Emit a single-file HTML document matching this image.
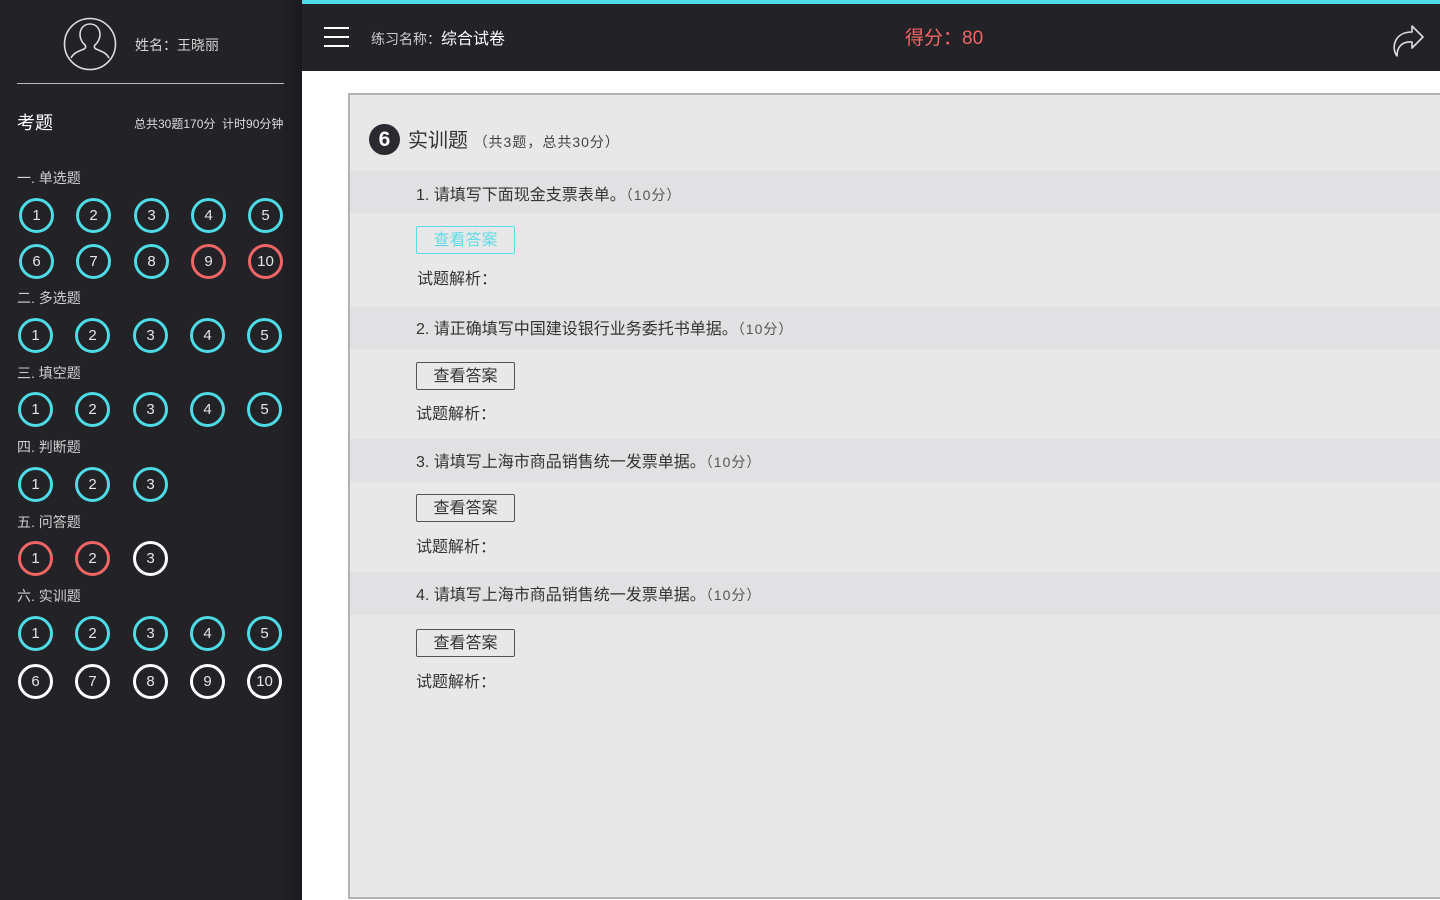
<!DOCTYPE html>
<html><head><meta charset="utf-8">
<style>
*{margin:0;padding:0;box-sizing:border-box}
body{width:1440px;height:900px;overflow:hidden;background:#fff;font-family:"Liberation Sans","Noto Sans CJK SC",sans-serif;position:relative}
.side{position:absolute;left:0;top:0;width:302px;height:900px;background:linear-gradient(to right,#232227 0,#232227 275px,#1b1a1e 302px)}
.a{position:absolute;white-space:nowrap}
.c{position:absolute;width:35px;height:35px;border-radius:50%;border:3px solid #4ddbe6;color:#e6e6e6;font-size:15px;line-height:30px;text-align:center}
.r{border-color:#f26565}.w{border-color:#fff}
.lbl{position:absolute;left:17px;color:#d0d0d0;font-size:14px}
.top{position:absolute;left:302px;top:0;width:1138px;height:71px;background:#232227;border-top:4px solid #4ddbe6}
.panel{position:absolute;left:348px;top:93px;width:1100px;height:806px;background:#e8e8e8;border:2px solid #b3b3b3}
.band{position:absolute;left:0;width:1100px;height:43px;background:#e1e1e3}
.q{position:absolute;left:66px;font-size:16px;color:#333}
.q small{font-size:14px;color:#555;letter-spacing:1px}
.btn{position:absolute;left:66px;width:99px;height:28px;border:1px solid #555;border-radius:2px;font-size:16px;color:#333;text-align:center;line-height:27px}
.ex{position:absolute;left:66px;font-size:16px;color:#333}
</style></head><body>
<div class="side">
<svg class="a" style="left:63px;top:17px" width="54" height="54" viewBox="0 0 54 54"><circle cx="27" cy="27" r="25.5" fill="none" stroke="#ddd" stroke-width="1.6"/><path d="M27 7c-6 0-10 4.5-10 10.5 0 4.5 2.5 8.5 5 10.5 1 1 1 3-1 4-4 2-10 3-13 9M27 7c6 0 10 4.5 10 10.5 0 4.5-2.5 8.5-5 10.5-1 1-1 3 1 4 4 2 10 3 13 9" fill="none" stroke="#ddd" stroke-width="1.6"/></svg>
<div class="a" style="left:135px;top:35px;color:#d6d6d6;font-size:14px">姓名：王晓丽</div>
<div class="a" style="left:17px;top:83px;width:267px;height:1px;background:#bbb"></div>
<div class="a" style="left:17px;top:109px;color:#fff;font-size:18px">考题</div>
<div class="a" style="left:134px;top:115px;color:#ddd;font-size:12px">总共30题170分&nbsp; 计时90分钟</div>
<div class="lbl" style="top:168px">一. 单选题</div>
<div class="c" style="left:19px;top:198px">1</div><div class="c" style="left:76px;top:198px">2</div><div class="c" style="left:134px;top:198px">3</div><div class="c" style="left:191px;top:198px">4</div><div class="c" style="left:248px;top:198px">5</div>
<div class="c" style="left:19px;top:244px">6</div><div class="c" style="left:76px;top:244px">7</div><div class="c" style="left:134px;top:244px">8</div><div class="c r" style="left:191px;top:244px">9</div><div class="c r" style="left:248px;top:244px">10</div>
<div class="lbl" style="top:288px">二. 多选题</div>
<div class="c" style="left:18px;top:318px">1</div><div class="c" style="left:75px;top:318px">2</div><div class="c" style="left:133px;top:318px">3</div><div class="c" style="left:190px;top:318px">4</div><div class="c" style="left:247px;top:318px">5</div>
<div class="lbl" style="top:363px">三. 填空题</div>
<div class="c" style="left:18px;top:392px">1</div><div class="c" style="left:75px;top:392px">2</div><div class="c" style="left:133px;top:392px">3</div><div class="c" style="left:190px;top:392px">4</div><div class="c" style="left:247px;top:392px">5</div>
<div class="lbl" style="top:437px">四. 判断题</div>
<div class="c" style="left:18px;top:467px">1</div><div class="c" style="left:75px;top:467px">2</div><div class="c" style="left:133px;top:467px">3</div>
<div class="lbl" style="top:512px">五. 问答题</div>
<div class="c r" style="left:18px;top:541px">1</div><div class="c r" style="left:75px;top:541px">2</div><div class="c w" style="left:133px;top:541px">3</div>
<div class="lbl" style="top:586px">六. 实训题</div>
<div class="c" style="left:18px;top:616px">1</div><div class="c" style="left:75px;top:616px">2</div><div class="c" style="left:133px;top:616px">3</div><div class="c" style="left:190px;top:616px">4</div><div class="c" style="left:247px;top:616px">5</div>
<div class="c w" style="left:18px;top:664px">6</div><div class="c w" style="left:75px;top:664px">7</div><div class="c w" style="left:133px;top:664px">8</div><div class="c w" style="left:190px;top:664px">9</div><div class="c w" style="left:247px;top:664px">10</div>
</div>
<div class="top">
<div class="a" style="left:22px;top:23px;width:25px;height:2px;background:#fff;box-shadow:0 9px 0 #fff,0 18px 0 #fff"></div>
<div class="a" style="left:69px;top:21px;color:#ccc;font-size:14px">练习名称：<span style="color:#fff;font-size:16px">综合试卷</span></div>
<div class="a" style="left:603px;top:19px;color:#f26565;font-size:19px">得分：80</div>
<svg class="a" style="left:1090px;top:14px" width="34" height="40" viewBox="0 0 34 40"><path d="M5 38C-1 30 2 14 20 14V8l11 11-11 11v-6C9 23 5 30 5 38z" fill="none" stroke="#ddd" stroke-width="1.6" stroke-linejoin="round"/></svg>
</div>
<div class="panel">
<div class="a" style="left:19px;top:29px;width:31px;height:31px;border-radius:50%;background:#2a2a30;color:#fff;font-size:21px;text-align:center;line-height:31px;font-weight:bold">6</div>
<div class="a" style="left:58px;top:29px;font-size:20px;color:#333">实训题 <span style="font-size:14px;color:#444;letter-spacing:1px">（共3题，总共30分）</span></div>
<div class="band" style="top:75px"></div>
<div class="q" style="top:86px">1. 请填写下面现金支票表单。<small>（10分）</small></div>
<div class="btn" style="top:131px;border-color:#62dbe6;color:#62dbe6">查看答案</div>
<div class="ex" style="top:170px;left:67px">试题解析：</div>
<div class="band" style="top:211px"></div>
<div class="q" style="top:220px">2. 请正确填写中国建设银行业务委托书单据。<small>（10分）</small></div>
<div class="btn" style="top:267px">查看答案</div>
<div class="ex" style="top:305px">试题解析：</div>
<div class="band" style="top:344px"></div>
<div class="q" style="top:353px">3. 请填写上海市商品销售统一发票单据。<small>（10分）</small></div>
<div class="btn" style="top:399px">查看答案</div>
<div class="ex" style="top:438px">试题解析：</div>
<div class="band" style="top:477px"></div>
<div class="q" style="top:486px">4. 请填写上海市商品销售统一发票单据。<small>（10分）</small></div>
<div class="btn" style="top:534px">查看答案</div>
<div class="ex" style="top:573px">试题解析：</div>
</div>
</body></html>
